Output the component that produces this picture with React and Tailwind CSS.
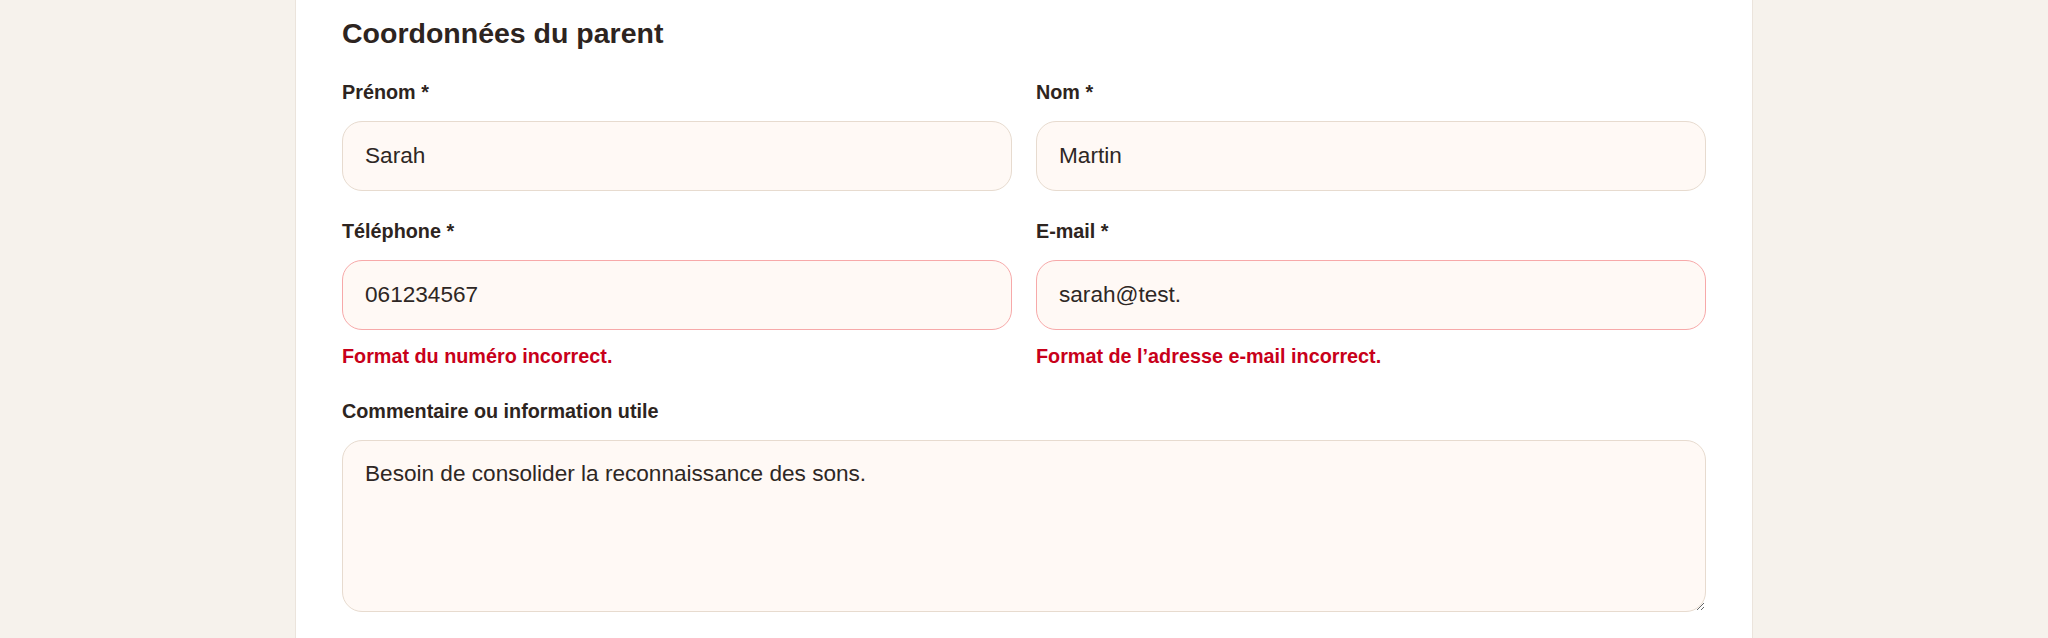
import React from "react";

const font = { fontFamily: '"Liberation Sans", Arial, Helvetica, sans-serif' };

function Field({ label, value, error }) {
  return (
    <div className="flex flex-col">
      <label className="text-[19.8px] leading-[30px] font-bold text-[#2d2420] mb-[14px]">{label}</label>
      <input
        readOnly
        value={value}
        className={
          error
            ? "h-[70px] w-full rounded-[20px] border border-[#f7a9a9] bg-[#fff9f5] px-[22px] text-[22.6px] text-[#2e2724] outline-none"
            : "h-[70px] w-full rounded-[20px] border border-[#e7dbcf] bg-[#fff9f5] px-[22px] text-[22.6px] text-[#2e2724] outline-none"
        }
        style={font}
      />
      {error && (
        <p className="mt-[11px] text-[19.8px] leading-[30px] font-bold text-[#c8001a]">{error}</p>
      )}
    </div>
  );
}

export default function App() {
  return (
    <div className="min-h-[638px] h-[638px] overflow-hidden bg-[#f6f2ec] flex justify-center" style={font}>
      <div className="w-[1458px] h-full bg-white border-x border-[#ebe4dc] px-[46px] pt-[16px]">
        <h2 className="text-[28.5px] leading-[34px] font-bold text-[#2d2420] mb-[27px]">Coordonnées du parent</h2>
        <div className="grid grid-cols-2 gap-x-[24px] gap-y-[25px]">
          <Field label="Prénom *" value="Sarah" />
          <Field label="Nom *" value="Martin" />
          <Field label="Téléphone *" value="061234567" error="Format du numéro incorrect." />
          <Field label="E-mail *" value="sarah@test." error="Format de l’adresse e-mail incorrect." />
          <div className="col-span-2 flex flex-col">
            <label className="text-[19.8px] leading-[30px] font-bold text-[#2d2420] mb-[14px]">Commentaire ou information utile</label>
            <textarea
              readOnly
              value="Besoin de consolider la reconnaissance des sons."
              className="h-[172px] w-full rounded-[20px] border border-[#e7dbcf] bg-[#fff9f5] px-[22px] py-[20px] text-[22.6px] leading-[26px] text-[#2e2724] outline-none resize-y"
              style={font}
            />
          </div>
        </div>
      </div>
    </div>
  );
}
